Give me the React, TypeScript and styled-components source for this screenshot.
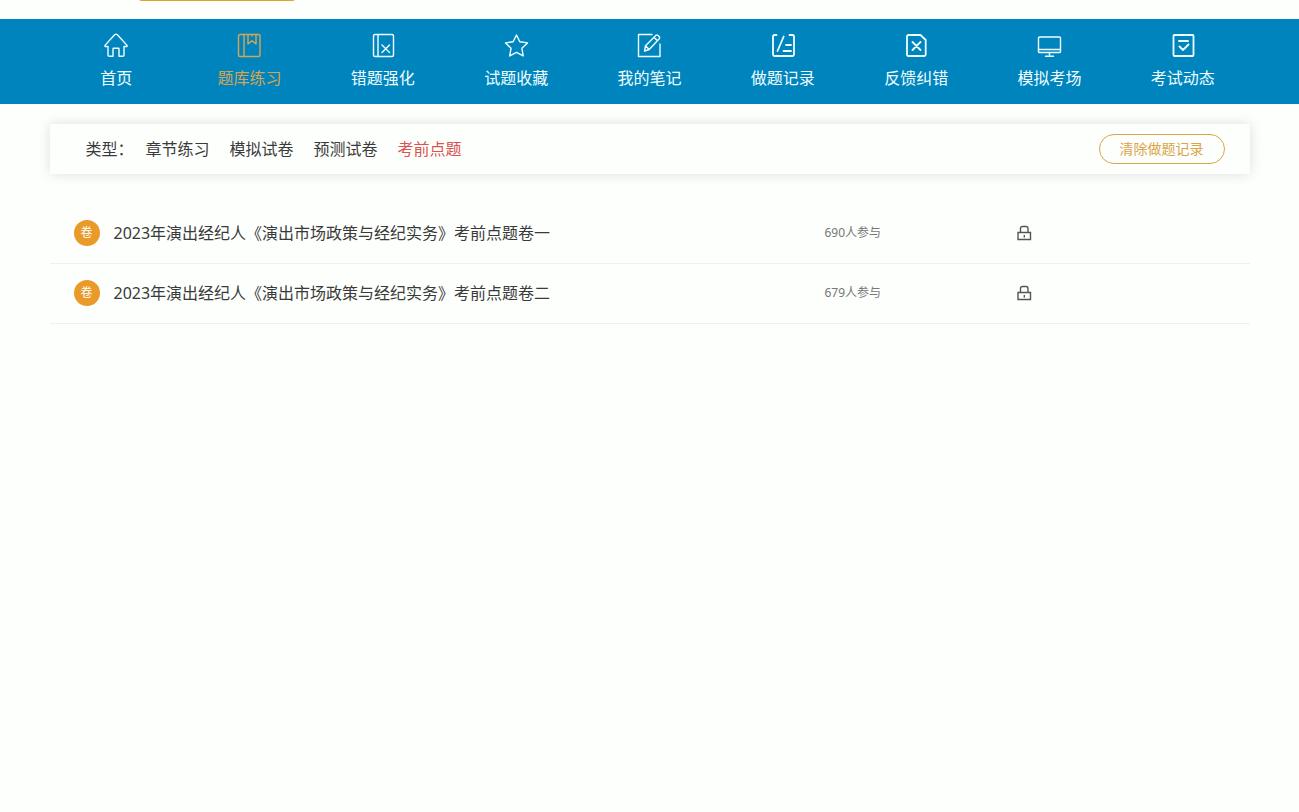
import type { ReactNode } from 'react';
import styled, { createGlobalStyle } from 'styled-components';

const GlobalStyle = createGlobalStyle`
  *, *::before, *::after { box-sizing: border-box; }
  body {
    margin: 0;
    background: #fcfffc;
    color: #3a3a3a;
    font-family: "Noto Sans", "Noto Sans CJK SC", sans-serif;
    font-size: 16px;
    line-height: 24px;
  }
  a { color: inherit; text-decoration: none; }
  ul { margin: 0; padding: 0; list-style: none; }
`;

const Container = styled.div`
  max-width: 1200px;
  margin: 0 auto;
`;

const Header = styled.header`
  height: 19px;
  overflow: hidden;
`;

const HeaderInner = styled(Container)`
  display: flex;
  align-items: flex-end;
  height: 1px;
  padding-left: 87px;
`;

const HeaderTab = styled.div`
  flex: none;
  width: 160px;
  height: 40px;
  border-radius: 5px;
  background: #e3a02c;
`;

const Nav = styled.nav`
  background: #0084be;
`;

const NavList = styled.ul`
  display: grid;
  grid-template-columns: repeat(9, 1fr);
  max-width: 1200px;
  && { margin: 0 auto; }
`;

const NavLink = styled.a<{ $active?: boolean }>`
  display: flex;
  flex-direction: column;
  align-items: center;
  gap: 8px;
  height: 85px;
  padding-top: 13px;
  color: ${(p) => (p.$active ? '#d6a552' : '#f0ffff')};
`;

const NavIcon = styled.svg`
  display: block;
  width: 26px;
  height: 26px;
  fill: none;
  stroke: currentColor;
  stroke-width: 1.4;
  stroke-linejoin: round;
  stroke-linecap: round;
`;

const FilterBar = styled.section`
  display: flex;
  align-items: center;
  height: 50px;
  margin: 20px 0 30px;
  padding: 0 25px 0 36px;
  background: #fdfffd;
  box-shadow: 0 0 12px rgba(0, 0, 0, 0.13);
`;

const FilterLabel = styled.span`
  margin-right: 12px;
`;

const FilterList = styled.ul`
  display: flex;
  gap: 20px;
`;

const FilterLink = styled.a<{ $active?: boolean }>`
  color: ${(p) => (p.$active ? '#d9534f' : 'inherit')};
`;

const ClearButton = styled.button`
  height: 30px;
  margin-left: auto;
  padding: 0 20px;
  border: 1px solid #dba448;
  border-radius: 15px;
  background: transparent;
  color: #dba448;
  font: inherit;
  font-size: 14px;
  line-height: 28px;
  cursor: pointer;
`;

const PaperRow = styled.li`
  display: grid;
  grid-template-columns: 26px 725px 191px auto;
  align-items: center;
  height: 60px;
  padding: 0 0 1px 24px;
  border-bottom: 1px solid #eff1ef;
`;

const Badge = styled.span`
  width: 26px;
  height: 26px;
  border-radius: 50%;
  background: #e99a28;
  color: #fff;
  font-size: 12px;
  line-height: 26px;
  text-align: center;
`;

const PaperTitle = styled.a`
  padding-left: 14px;
`;

const Joined = styled.span`
  color: #777;
  font-size: 12px;
`;

const LockIcon = styled.svg`
  display: block;
  width: 16px;
  height: 16px;
  fill: none;
  stroke: #555;
  stroke-width: 1.4;
`;

const navItems: { label: string; active?: boolean; icon: ReactNode }[] = [
  {
    label: '首页',
    icon: <path d="M2 13.400 11.600 2.800q1.400-1.200 2.800 0L24 13.400q.4 1.100-.8 1.100H21V23q0 1.300-1.300 1.300H16v-7.400q0-.6-.6-.6h-4.800q-.6 0-.6.6v7.400H6.300Q5 24.300 5 23v-8.500H2.800Q1.600 14.500 2 13.400Z" />,
  },
  {
    label: '题库练习',
    active: true,
    icon: (
      <>
        <rect x="2.5" y="2.500" width="21.500" height="22" rx="1.500" />
        <path d="M8 2.500v22M12 2.500V12l4-3.300 4 3.300V2.500M16 2.500v1.500" />
      </>
    ),
  },
  {
    label: '错题强化',
    icon: (
      <>
        <rect x="3.500" y="2.500" width="20" height="22" rx="1.500" />
        <path d="M8 2.500v22M12 13l7.500 7.500M19.500 13 12 20.500" />
      </>
    ),
  },
  {
    label: '试题收藏',
    icon: <path d="m13.500 3 3.300 6.800 7.700 1.100-5.600 5.400 1.300 7.600-6.700-3.600-6.800 3.600 1.300-7.600-5.500-5.400 7.600-1.100Z" />,
  },
  {
    label: '我的笔记',
    icon: (
      <>
        <path d="M16 2.500H2.500v22H24V12" />
        <path d="m8.500 19 1-5.300L20 3.300q1-.8 2 .1l1.300 1.300q.9 1 0 2L13.200 17.500ZM9.500 13.700l3.700 3.800M18 5.300l3.400 3.400" />
      </>
    ),
  },
  {
    label: '做题记录',
    icon: (
      <path
        strokeWidth="1.8"
        d="M6.500 3H4.500Q3 3 3 4.500v18Q3 24 4.500 24h18q1.500 0 1.500-1.500v-18Q24 3 22.500 3h-3M13.700 4.500 7.500 19M16 13h5M13.500 19H21"
      />
    ),
  },
  {
    label: '反馈纠错',
    icon: (
      <path
        strokeWidth="1.8"
        d="M5.500 3H17.500L22.700 8v14.500q0 1.500-1.500 1.500H5.500Q4 24 4 22.500v-18Q4 3 5.500 3ZM9.500 10l8 8M17.500 10l-8 8"
      />
    ),
  },
  {
    label: '模拟考场',
    icon: (
      <>
        <rect x="2.500" y="5" width="22" height="15.500" rx="1" />
        <path d="M2.500 17.500h22M13.500 20.500V24M9.500 24.300h8" />
      </>
    ),
  },
  {
    label: '考试动态',
    icon: (
      <path
        strokeWidth="1.8"
        d="M4.500 3h18q1 0 1 1v19q0 1-1 1h-18q-1 0-1-1V4q0-1 1-1ZM9 9h9M9.500 14.500l3.500 3.500 5.500-5.500"
      />
    ),
  },
];

const filters = ['章节练习', '模拟试卷', '预测试卷', '考前点题'];

const papers = [
  { title: '2023年演出经纪人《演出市场政策与经纪实务》考前点题卷一', joined: 690 },
  { title: '2023年演出经纪人《演出市场政策与经纪实务》考前点题卷二', joined: 679 },
];

export default function App() {
  return (
    <>
      <GlobalStyle />
      <Header>
        <HeaderInner>
          <HeaderTab />
        </HeaderInner>
      </Header>
      <Nav>
        <NavList>
          {navItems.map((item) => (
            <li key={item.label}>
              <NavLink href="#" $active={item.active}>
                <NavIcon viewBox="0 0 26 26" aria-hidden="true">
                  {item.icon}
                </NavIcon>
                {item.label}
              </NavLink>
            </li>
          ))}
        </NavList>
      </Nav>
      <Container as="main">
        <FilterBar>
          <FilterLabel>类型：</FilterLabel>
          <FilterList>
            {filters.map((name) => (
              <li key={name}>
                <FilterLink href="#" $active={name === '考前点题'}>
                  {name}
                </FilterLink>
              </li>
            ))}
          </FilterList>
          <ClearButton type="button">清除做题记录</ClearButton>
        </FilterBar>
        <ul>
          {papers.map((paper) => (
            <PaperRow key={paper.title}>
              <Badge>卷</Badge>
              <PaperTitle href="#">{paper.title}</PaperTitle>
              <Joined>{paper.joined}人参与</Joined>
              <LockIcon viewBox="0 0 16 16" aria-hidden="true">
                <path d="M2 7.500h12.500v7H2ZM4.500 7.500V3.500q0-2 2-2h3.500q2 0 2 2v4M8.300 10v2.500" />
              </LockIcon>
            </PaperRow>
          ))}
        </ul>
      </Container>
    </>
  );
}
